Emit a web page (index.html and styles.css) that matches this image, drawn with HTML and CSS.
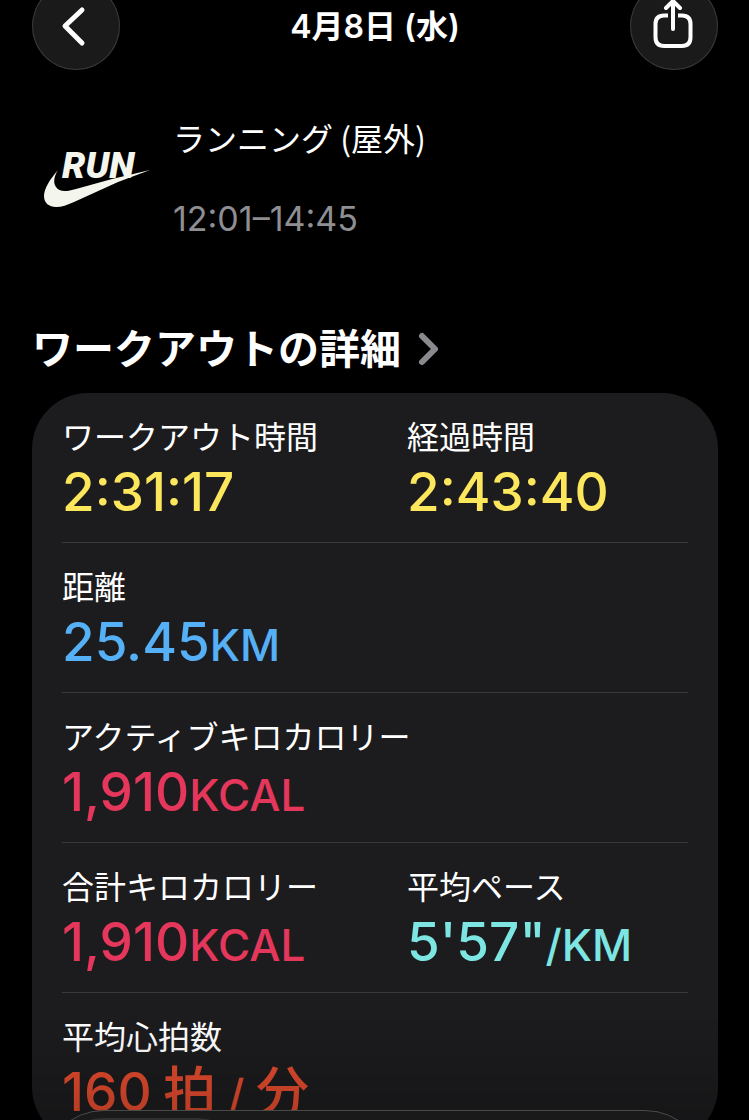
FILE: index.html
```
<!DOCTYPE html>
<html lang="ja">
<head>
  <meta charset="utf-8">
  <meta name="viewport" content="width=device-width, initial-scale=1">
  <title>4月8日 (水)</title>
  <link rel="stylesheet" href="styles.css">
</head>
<body>
  <header class="header">
    <button class="round-button" type="button" aria-label="戻る">
      <svg width="88" height="88" viewBox="0 0 88 88" fill="none" stroke="currentColor" stroke-width="5" stroke-linecap="round" stroke-linejoin="round">
        <path d="M50 28 L33 44 L50 61"/>
      </svg>
    </button>
    <h1 class="date">4月8日 (水)</h1>
    <button class="round-button" type="button" aria-label="共有">
      <svg width="88" height="88" viewBox="0 0 88 88" fill="none" stroke="currentColor" stroke-width="4" stroke-linecap="round" stroke-linejoin="round">
        <path d="M43 47 V20 M36 26 L43 19 L50 26"/>
        <path stroke-linecap="butt" d="M38 33.500 H34 Q25.500 33.500 25.500 42 V55 Q25.500 64 34 64 H52 Q60.500 64 60.500 55 V42 Q60.500 33.500 52 33.500 H48"/>
      </svg>
    </button>
  </header>

  <main class="content">
    <section class="summary">
      <svg class="logo" width="108" height="64" viewBox="0 0 108 64" role="img" aria-label="Nike Run">
        <text class="logo-text" x="18" y="32">RUN</text>
        <path d="M14 24 C6 33 0 43 0 50 C0 57 5 61 12 61 C18 61 23 59 30 56 L74 36 L106 24 L68 33 L32 43 C22 46 15 46 12 41 C9 37 10 30 14 24 Z"/>
      </svg>
      <div class="summary-text">
        <div class="name">ランニング (屋外)</div>
        <div class="time">12:01–14:45</div>
      </div>
    </section>

    <h2 class="section-title">
      <a href="#details">ワークアウトの詳細
        <svg width="24" height="36" viewBox="0 0 24 36" fill="none" stroke="currentColor" stroke-width="6" stroke-linecap="round" stroke-linejoin="round">
          <path d="M5 5 L18 18 L5 31"/>
        </svg>
      </a>
    </h2>

    <dl class="card" id="details">
      <div class="row">
        <div class="metric">
          <dt>ワークアウト時間</dt>
          <dd class="yellow">2:31:17</dd>
        </div>
        <div class="metric">
          <dt>経過時間</dt>
          <dd class="yellow">2:43:40</dd>
        </div>
      </div>
      <div class="row">
        <div class="metric">
          <dt>距離</dt>
          <dd class="blue">25.45<span class="unit">KM</span></dd>
        </div>
      </div>
      <div class="row">
        <div class="metric">
          <dt>アクティブキロカロリー</dt>
          <dd class="pink">1,910<span class="unit">KCAL</span></dd>
        </div>
      </div>
      <div class="row">
        <div class="metric">
          <dt>合計キロカロリー</dt>
          <dd class="pink">1,910<span class="unit">KCAL</span></dd>
        </div>
        <div class="metric">
          <dt>平均ペース</dt>
          <dd class="teal">5'57"<span class="unit">/KM</span></dd>
        </div>
      </div>
      <div class="row">
        <div class="metric">
          <dt>平均心拍数</dt>
          <dd class="orange">160<span class="unit"> </span>拍<span class="unit"> / </span>分</dd>
        </div>
      </div>
    </dl>
  </main>

  <div class="fade"></div>
  <nav class="tab-bar">
    <div class="tab-selected"></div>
  </nav>
</body>
</html>
```

FILE: styles.css
```
:root {
  --background: #000;
  --card: #1c1c1e;
  --button: #1a1a1a;
  --line: #38383a;
  --text: #fff;
  --muted: #8e8e93;
  --yellow: #fbe65c;
  --blue: #56b0f6;
  --pink: #e4375b;
  --teal: #7de5e2;
  --orange: #e24b2e;
  --font-sans: Inter, "Noto Sans CJK JP", sans-serif;
}

* {
  box-sizing: border-box;
}

body {
  margin: 0;
  height: 100vh;
  overflow: hidden;
  background: var(--background);
  color: var(--text);
  font-family: var(--font-sans);
  font-size: 32px;
}

/* Header is partly scrolled off the top */
.header {
  display: flex;
  align-items: center;
  justify-content: space-between;
  margin-top: -18px;
  padding: 0 31px 0 32px;
}

.round-button {
  width: 88px;
  height: 88px;
  padding: 0;
  border: 0;
  border-radius: 50%;
  background: var(--button);
  box-shadow: inset 0 0 0 1px #3a3a3a;
  color: var(--text);
}

.round-button svg {
  display: block;
}

.date {
  margin: 0;
  padding-top: 2px;
  font-size: 32px;
  font-weight: 600;
  line-height: 40px;
}

.content {
  padding: 0 31px 0 32px;
}

.summary {
  display: flex;
  align-items: center;
  gap: 21px;
  padding: 46px 0 0 12px;
}

.logo {
  fill: #f4f5ec;
}

.logo-text {
  font-family: Roboto, sans-serif;
  font-size: 37px;
  font-style: italic;
  font-weight: 900;
}

.name {
  font-family: "Noto Sans CJK JP", sans-serif;
  font-weight: 400;
  line-height: 42px;
}

.time {
  margin-top: 40px;
  color: var(--muted);
  font-size: 34px;
  line-height: 42px;
}

.section-title {
  margin: 84px 0 19px;
  font-size: 41px;
  font-weight: 700;
  line-height: 50px;
}

.section-title a {
  display: flex;
  align-items: center;
  gap: 16px;
  color: inherit;
  text-decoration: none;
}

.section-title svg {
  color: #8a8a8e;
}

.card {
  margin: 0;
  padding: 0 30px;
  border-radius: 56px;
  background: var(--card);
}

.row {
  display: grid;
  grid-template-columns: 1fr 1fr;
  column-gap: 64px;
  height: 150px;
  padding-top: 25px;
  border-bottom: 1px solid var(--line);
}

.row:last-child {
  border-bottom: 0;
}

.metric {
  white-space: nowrap;
}

dt {
  line-height: 40px;
}

dd {
  margin: 0;
  font-size: 53px;
  font-weight: 500;
  line-height: 68px;
}

.unit {
  font-size: 44px;
}

.yellow { color: var(--yellow); }
.blue { color: var(--blue); }
.pink { color: var(--pink); }
.teal { color: var(--teal); }
.orange { color: var(--orange); }

.fade {
  position: fixed;
  right: 0;
  bottom: 0;
  left: 0;
  height: 100px;
  background: linear-gradient(transparent, rgba(0, 0, 0, 0.2));
}

/* Floating tab bar, only its top edge is on screen */
.tab-bar {
  position: fixed;
  right: 42px;
  bottom: -114px;
  left: 42px;
  height: 124px;
  padding: 7px;
  border: 1px solid #4a4a4a;
  border-radius: 62px;
  background: #1a1a1a;
}

.tab-selected {
  width: 200px;
  height: 108px;
  border-radius: 54px;
  background: #303030;
}
```
